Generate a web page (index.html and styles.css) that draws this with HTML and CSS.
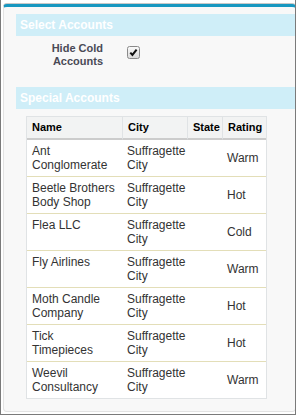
FILE: index.html
```html
<!DOCTYPE html>
<html>
<head>
<meta charset="utf-8">
<link rel="stylesheet" href="styles.css">
</head>
<body>
<div class="frame">
  <div class="panel">
    <h3 class="sub">Select Accounts</h3>
    <div class="field-row">
      <label class="lbl">Hide Cold Accounts</label>
      <span class="cb">
        <svg width="13" height="13" viewBox="0 0 13 13">
          <defs>
            <linearGradient id="g" x1="0" y1="0" x2="0" y2="1">
              <stop offset="0" stop-color="#fbfbfb"/>
              <stop offset="1" stop-color="#d9d9d9"/>
            </linearGradient>
          </defs>
          <rect x="0.5" y="0.5" width="12" height="12" rx="2" fill="url(#g)" stroke="#8a8a8a"/>
          <path d="M3.3 6.6 L5.4 8.9 L9.6 3.6" fill="none" stroke="#111" stroke-width="2"/>
        </svg>
      </span>
    </div>
    <h3 class="sub">Special Accounts</h3>
    <table class="grid">
      <colgroup>
        <col class="c-name"><col class="c-city"><col class="c-state"><col class="c-rating">
      </colgroup>
      <thead>
        <tr><th>Name</th><th>City</th><th>State</th><th>Rating</th></tr>
      </thead>
      <tbody>
        <tr><td>Ant Conglomerate</td><td class="city">Suffragette City</td><td></td><td class="rating">Warm</td></tr>
        <tr><td>Beetle Brothers Body Shop</td><td class="city">Suffragette City</td><td></td><td class="rating">Hot</td></tr>
        <tr><td>Flea LLC</td><td class="city">Suffragette City</td><td></td><td class="rating">Cold</td></tr>
        <tr><td>Fly Airlines</td><td class="city">Suffragette City</td><td></td><td class="rating">Warm</td></tr>
        <tr><td>Moth Candle Company</td><td class="city">Suffragette City</td><td></td><td class="rating">Hot</td></tr>
        <tr><td>Tick Timepieces</td><td class="city">Suffragette City</td><td></td><td class="rating">Hot</td></tr>
        <tr><td>Weevil Consultancy</td><td class="city">Suffragette City</td><td></td><td class="rating">Warm</td></tr>
      </tbody>
    </table>
  </div>
</div>
</body>
</html>
```

FILE: styles.css
```css
html, body {
  margin: 0;
  padding: 0;
  background: #ffffff;
}

.frame {
  width: 296px;
  height: 415px;
  box-sizing: border-box;
  border: 1px solid #7a7a7a;
  border-top: none;
  overflow: hidden;
  padding: 4px 0 0 2px;
  font-family: "Liberation Sans", Arial, sans-serif;
}

.panel {
  width: 293px;
  box-sizing: border-box;
  background: #f8f8f8;
  border: 1px solid #e3e3e3;
  border-top: 3px solid #1797c0;
  border-radius: 4px;
  box-shadow: 0 -1px 0 #c8c8c8;
  padding: 7px 0 12px 0;
}

.sub {
  margin: 0 0 0 12px;
  height: 22px;
  line-height: 22px;
  padding-left: 4px;
  background: #cfeef8;
  color: #ffffff;
  font-size: 12px;
  font-weight: bold;
}

.field-row {
  display: flex;
  align-items: flex-start;
  padding: 6px 0 19px 12px;
}

.lbl {
  width: 87px;
  text-align: right;
  font-size: 11px;
  line-height: 13px;
  font-weight: bold;
  color: #4a4a56;
}

.cb {
  display: block;
  width: 13px;
  height: 13px;
  margin: 4px 0 0 24px;
}

.cb svg {
  display: block;
}

.grid {
  margin: 7px 0 0 22px;
  width: 241px;
  table-layout: fixed;
  border-collapse: separate;
  border-spacing: 0;
  border: 1px solid #e0e3e5;
  background: #ffffff;
  font-size: 12px;
  color: #333333;
}

.c-name { width: 96px; }
.c-city { width: 65px; }
.c-state { width: 35px; }
.c-rating { width: 43px; }

.grid th {
  background: #f2f3f3;
  color: #000000;
  font-size: 11px;
  font-weight: bold;
  line-height: 11px;
  text-align: left;
  padding: 5px 1px 5px 5px;
  border-right: 1px solid #e0e3e5;
  border-bottom: 2px solid #cccccc;
  white-space: nowrap;
}

.grid th:last-child {
  border-right: none;
}

.grid td {
  line-height: 14px;
  padding: 4px 6px 4px 5px;
  vertical-align: top;
  border-bottom: 1px solid #e3deb8;
}

.grid tbody tr:last-child td {
  border-bottom: none;
}

.grid td.city {
  padding: 4px 1px 4px 4px;
}

.grid td.rating {
  vertical-align: middle;
  padding: 4px 1px 4px 4px;
}
```
